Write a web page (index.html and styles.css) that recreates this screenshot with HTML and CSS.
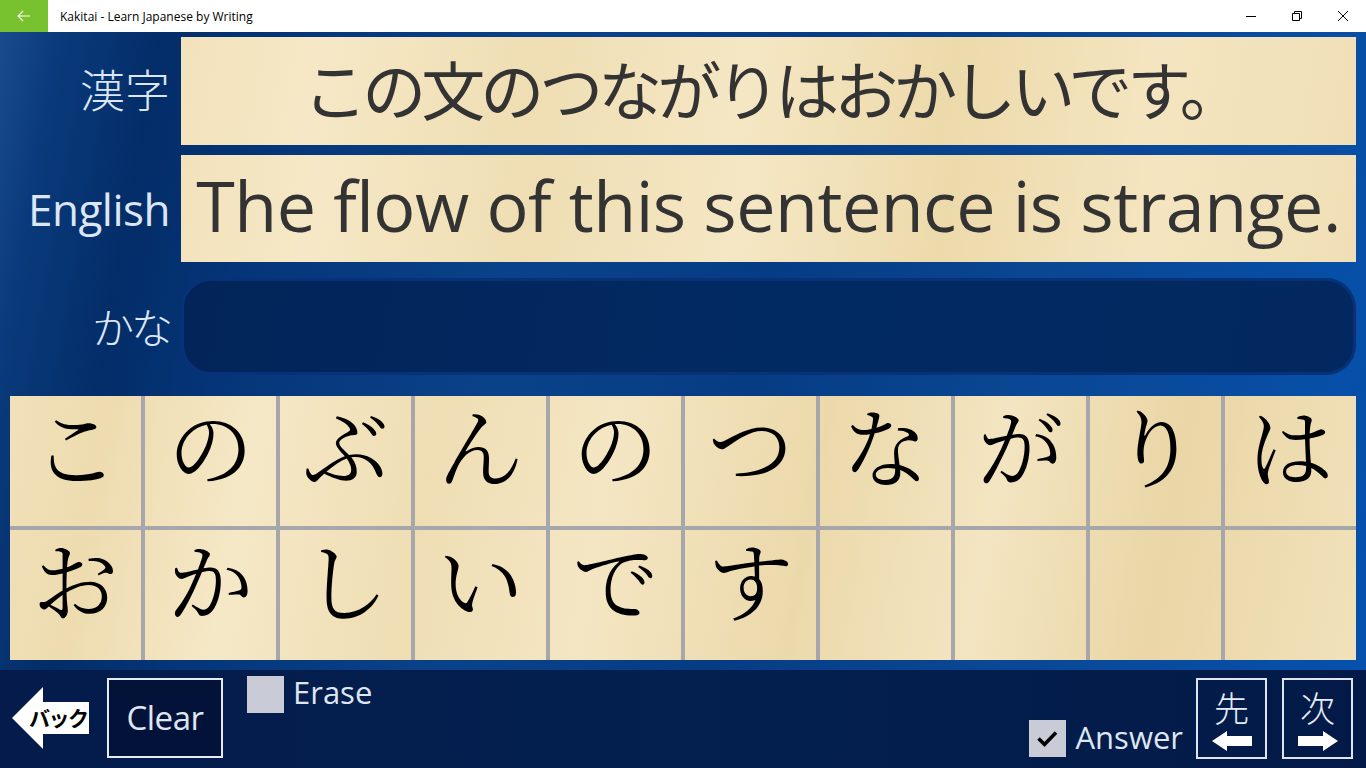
FILE: index.html
```html
<!DOCTYPE html>
<html lang="ja">
<head>
<meta charset="utf-8">
<title>Kakitai - Learn Japanese by Writing</title>
<link rel="stylesheet" href="styles.css">
</head>
<body>
<div class="window">
  <header class="titlebar">
    <div class="tb-back">
      <svg width="14" height="12" viewBox="0 0 14 12"><path d="M1 6 H13 M6 1 L1 6 L6 11" fill="none" stroke="#fff" stroke-width="1.1"/></svg>
    </div>
    <span class="title">Kakitai - Learn Japanese by Writing</span>
    <div class="controls">
      <div class="ctrl"><svg width="10" height="10" viewBox="0 0 10 10"><path d="M0 5.5 H10" stroke="#000" stroke-width="1"/></svg></div>
      <div class="ctrl"><svg width="10" height="10" viewBox="0 0 10 10"><path d="M0.5 2.5 H7.5 V9.5 H0.5 Z M2.5 2.5 V0.5 H9.5 V7.5 H7.5" fill="none" stroke="#000" stroke-width="1"/></svg></div>
      <div class="ctrl"><svg width="10" height="10" viewBox="0 0 10 10"><path d="M0 0 L10 10 M10 0 L0 10" stroke="#000" stroke-width="1"/></svg></div>
    </div>
  </header>

  <main class="main">
    <div class="row row-kanji">
      <div class="label label-kanji">漢字</div>
      <div class="box cream"><span class="kanji-text">この文のつながりはおかしいです。</span></div>
    </div>
    <div class="row row-english">
      <div class="label label-en">English</div>
      <div class="box cream"><span class="english-text">The flow of this sentence is strange.</span></div>
    </div>
    <div class="row row-kana">
      <div class="label label-kana">かな</div>
      <div class="box kana"></div>
    </div>

    <div class="grid">
      <div class="cell">こ</div>
      <div class="cell">の</div>
      <div class="cell">ぶ</div>
      <div class="cell">ん</div>
      <div class="cell">の</div>
      <div class="cell">つ</div>
      <div class="cell">な</div>
      <div class="cell">が</div>
      <div class="cell">り</div>
      <div class="cell">は</div>
      <div class="cell">お</div>
      <div class="cell">か</div>
      <div class="cell">し</div>
      <div class="cell">い</div>
      <div class="cell">で</div>
      <div class="cell">す</div>
      <div class="cell"></div>
      <div class="cell"></div>
      <div class="cell"></div>
      <div class="cell"></div>
    </div>
  </main>

  <footer class="bottombar">
    <div class="back-btn">
      <svg class="back-arrow" width="77" height="62" viewBox="0 0 77 62"><polygon points="0,31 31,0 31,15 77,15 77,47 31,47 31,62" fill="#fff"/></svg>
      <span class="back-label">バック</span>
    </div>
    <div class="clear-btn">Clear</div>
    <div class="check erase">
      <span class="checkbox"></span>
      <span class="check-text">Erase</span>
    </div>
    <div class="check answer">
      <span class="checkbox">
        <svg width="37" height="37" viewBox="0 0 37 37"><path d="M9.5 18.5 L15.5 24.5 L27 12.5" fill="none" stroke="#000" stroke-width="3.6"/></svg>
      </span>
      <span class="check-text">Answer</span>
    </div>
    <div class="nav prev">
      <span class="nav-char">先</span>
      <svg width="40" height="20" viewBox="0 0 40 20"><polygon points="0,10 15,0 15,5 40,5 40,15 15,15 15,20" fill="#fff"/></svg>
    </div>
    <div class="nav next">
      <span class="nav-char">次</span>
      <svg width="40" height="20" viewBox="0 0 40 20"><polygon points="40,10 25,0 25,5 0,5 0,15 25,15 25,20" fill="#fff"/></svg>
    </div>
  </footer>
</div>
</body>
</html>
```

FILE: styles.css
```css
html, body {
  margin: 0;
  padding: 0;
}

body {
  width: 1366px;
  height: 768px;
  overflow: hidden;
  font-family: "Open Sans", "Noto Sans CJK JP", sans-serif;
}

.window {
  width: 1366px;
  height: 768px;
  display: flex;
  flex-direction: column;
}

/* Title bar */
.titlebar {
  height: 32px;
  flex: 0 0 32px;
  background: #ffffff;
  display: flex;
  align-items: center;
}

.tb-back {
  width: 48px;
  height: 32px;
  background: #79c22f;
  display: flex;
  align-items: center;
  justify-content: center;
}

.title {
  margin-left: 12px;
  font-size: 12px;
  color: #000;
}

.controls {
  margin-left: auto;
  display: flex;
}

.ctrl {
  width: 46px;
  height: 32px;
  display: flex;
  align-items: center;
  justify-content: center;
}

/* Main area */
.main {
  height: 638px;
  flex: 0 0 638px;
  box-sizing: border-box;
  padding: 5px 10px 0 0;
  display: flex;
  flex-direction: column;
  background:
    linear-gradient(100deg, #1a4c8c 0%, #0a3a7b 4%, #032d68 11%, #05367a 20%, #0a4289 38%, #063c84 55%, #0a4794 75%, #0651ad 100%);
}

.row {
  display: flex;
}

.row-kanji { height: 108px; }
.row-english { height: 107px; margin-top: 10px; }
.row-kana { height: 97px; margin-top: 16px; }

.label {
  width: 181px;
  flex: 0 0 181px;
  box-sizing: border-box;
  padding-right: 12px;
  display: flex;
  align-items: center;
  justify-content: flex-end;
  color: #dce6f4;
  white-space: nowrap;
}

.label-kanji {
  font-family: "Noto Sans CJK JP", sans-serif;
  font-size: 45px;
  font-weight: 300;
  padding-bottom: 6px;
  padding-right: 11px;
}

.label-kana {
  font-family: "Noto Sans CJK JP", sans-serif;
  font-size: 42px;
  font-weight: 300;
  padding-bottom: 2px;
  padding-right: 11px;
  letter-spacing: -3px;
}

.label-en {
  font-size: 44px;
  padding-right: 11px;
  letter-spacing: -0.5px;
}

.box {
  flex: 1;
  min-width: 0;
}

.cream {
  display: flex;
  align-items: center;
  justify-content: center;
  overflow: hidden;
  white-space: nowrap;
  color: #333333;
  background: linear-gradient(100deg, #f2e2bc 0%, #f6e8c6 12%, #efdeb3 30%, #f5e7c4 48%, #eddaab 65%, #f4e5c0 82%, #f0dfb6 100%);
}

.kanji-text {
  font-family: "Noto Sans CJK JP", sans-serif;
  font-size: 64px;
  letter-spacing: -5px;
  padding-bottom: 8px;
  margin-right: -5px;
}

.english-text {
  font-size: 70px;
  letter-spacing: -0.5px;
  padding-bottom: 8px;
}

.kana {
  box-sizing: border-box;
  border-radius: 30px;
  border: 3px solid #07327a;
  background: linear-gradient(100deg, #022459 0%, #022a62 50%, #02285f 100%);
}

/* Writing grid */
.grid {
  margin: 21px 0 0 10px;
  height: 264px;
  flex: 0 0 264px;
  display: grid;
  grid-template-columns: repeat(10, minmax(0, 1fr));
  grid-template-rows: repeat(2, minmax(0, 1fr));
  gap: 4px;
  background: #a7a7ab;
}

.cell {
  display: flex;
  align-items: center;
  justify-content: center;
  box-sizing: border-box;
  padding-bottom: 34px;
  font-family: "Noto Serif CJK JP", "IPAMincho", "TakaoMincho", "Noto Sans CJK JP", serif;
  font-size: 86px;
  line-height: 1;
  font-weight: 400;
  color: #000;
  background: linear-gradient(100deg, #f3e4c0 0%, #eedcb0 12%, #f5e8c6 22%, #efdeb4 34%, #f4e6c3 46%, #ecd9ab 60%, #f3e5c1 72%, #ead6a6 84%, #f2e3bd 100%);
  background-attachment: fixed;
}

/* Bottom bar */
.bottombar {
  height: 98px;
  flex: 0 0 98px;
  display: flex;
  align-items: flex-start;
  background: linear-gradient(90deg, #041b4b 0%, #03204f 50%, #031a48 100%);
  color: #dfe6f0;
}

.back-btn {
  position: relative;
  width: 77px;
  height: 62px;
  margin: 17px 0 0 12px;
}

.back-arrow {
  display: block;
}

.back-label {
  position: absolute;
  left: 17px;
  top: 15px;
  font-family: "Noto Sans CJK JP", sans-serif;
  font-weight: 700;
  font-size: 21px;
  line-height: 30px;
  letter-spacing: -1.5px;
  color: #000;
}

.clear-btn {
  width: 116px;
  height: 80px;
  box-sizing: border-box;
  margin: 8px 0 0 18px;
  border: 2px solid #e6ebf2;
  background: #031239;
  display: flex;
  align-items: center;
  justify-content: center;
  font-size: 33px;
  letter-spacing: -0.5px;
  padding-bottom: 2px;
}

.check {
  display: flex;
  align-items: center;
}

.checkbox {
  width: 37px;
  height: 37px;
  background: #c9ccd7;
  display: block;
}

.checkbox svg {
  display: block;
}

.check-text {
  margin-left: 10px;
  font-size: 31px;
  line-height: 37px;
  padding-bottom: 2px;
}

.erase {
  margin: 6px 0 0 24px;
}

.erase .check-text {
  margin-left: 9px;
  margin-top: -2px;
}

.answer {
  margin: 49px 0 0 auto;
}

.nav {
  width: 71px;
  height: 81px;
  box-sizing: border-box;
  margin-top: 8px;
  border: 2px solid #dfe5ef;
  display: flex;
  flex-direction: column;
  align-items: center;
}

.nav svg {
  display: block;
  margin-top: 4px;
}

.nav-char {
  font-family: "Noto Sans CJK JP", sans-serif;
  font-size: 35px;
  font-weight: 300;
  line-height: 40px;
  margin-top: 7px;
  color: #e6ecf5;
}

.prev {
  margin-left: 13px;
}

.next {
  margin-left: 15px;
  margin-right: 13px;
}
```
